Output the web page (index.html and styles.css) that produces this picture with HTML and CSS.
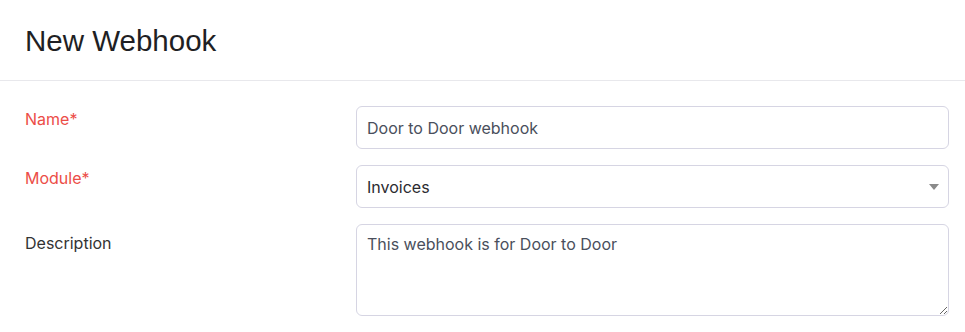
FILE: index.html
```html
<!DOCTYPE html>
<html lang="en">
<head>
    <meta charset="UTF-8">
    <title>New Webhook</title>
    <link rel="stylesheet" href="styles.css">
</head>
<body>
    <div class="page-header">
        <h1>New Webhook</h1>
    </div>
    <form class="webhook-form">
        <div class="form-row">
            <label class="required" for="name">Name*</label>
            <input type="text" id="name" value="Door to Door webhook">
        </div>
        <div class="form-row">
            <label class="required" for="module">Module*</label>
            <div class="select-wrap">
                <select id="module">
                    <option>Invoices</option>
                </select>
            </div>
        </div>
        <div class="form-row">
            <label class="area-label" for="description">Description</label>
            <textarea id="description">This webhook is for Door to Door</textarea>
        </div>
    </form>
</body>
</html>
```

FILE: styles.css
```css
* {
    margin: 0;
    padding: 0;
    box-sizing: border-box;
}

body {
    background: white;
    font-family: 'Inter', sans-serif;
    color: #333333;
}

/* Header */
.page-header {
    height: 81px;
    display: flex;
    align-items: center;
    padding: 0 25px;
    border-bottom: 1px solid #e8e8ec;
}

.page-header h1 {
    font-family: 'Liberation Sans', Arial, sans-serif;
    font-size: 29.5px;
    font-weight: 400;
    color: #1f1f24;
    margin-top: 1px;
}

/* Form */
.webhook-form {
    display: flex;
    flex-direction: column;
    gap: 16px;
    padding: 25px 16px 0 25px;
}

.form-row {
    display: grid;
    grid-template-columns: 331px 1fr;
    align-items: start;
}

.form-row label {
    font-size: 16px;
    line-height: 20px;
    padding-top: 3px;
    color: #333333;
}

.form-row label.required {
    color: #ec4d47;
}

.form-row label.area-label {
    padding-top: 9px;
}

.form-row input,
.form-row select,
.form-row textarea {
    width: 100%;
    font-family: 'Inter', sans-serif;
    font-size: 16px;
    color: #4a4f5c;
    background: white;
    border: 1px solid #d6d5e3;
    border-radius: 6px;
    outline: none;
}

.form-row input,
.form-row select {
    height: 43px;
    padding: 0 10px;
}

.form-row select {
    appearance: none;
    -webkit-appearance: none;
    color: #2b2b30;
}

.select-wrap {
    position: relative;
}

.select-wrap::after {
    content: '';
    position: absolute;
    right: 10px;
    top: 19px;
    border-left: 5px solid transparent;
    border-right: 5px solid transparent;
    border-top: 6px solid #8a8a8a;
    pointer-events: none;
}

.form-row textarea {
    height: 92px;
    padding: 9px 10px;
    line-height: 20px;
    resize: vertical;
}
```
